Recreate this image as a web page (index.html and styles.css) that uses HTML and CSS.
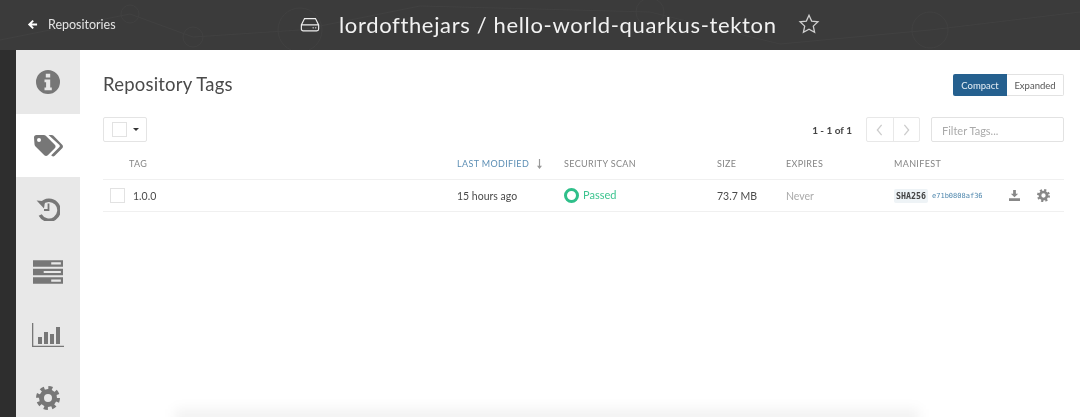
FILE: index.html
```html
<!DOCTYPE html>
<html lang="en">
<head>
    <meta charset="UTF-8">
    <meta name="viewport" content="width=device-width, initial-scale=1.0">
    <title>Repository Tags</title>
    <link rel="stylesheet" href="styles.css">
</head>
<body>
    <svg class="defs" width="0" height="0">
        <symbol id="gear" viewBox="0 0 24 24">
            <circle cx="12" cy="12" r="6.5" fill="none" stroke="currentColor" stroke-width="5"></circle>
            <circle cx="12" cy="12" r="9.8" fill="none" stroke="currentColor" stroke-width="4.4" stroke-dasharray="3.9 3.8"></circle>
        </symbol>
    </svg>

    <header class="topbar">
        <svg class="texture" width="1080" height="50" viewBox="0 0 1080 50">
            <circle cx="130" cy="14" r="9"></circle>
            <circle cx="193" cy="37" r="10"></circle>
            <circle cx="300" cy="30" r="22"></circle>
            <circle cx="650" cy="12" r="14"></circle>
            <circle cx="930" cy="30" r="18"></circle>
            <path d="M0 40 130 14 193 37 300 30 420 6 650 12 780 44 930 30 1080 12"></path>
        </svg>
        <a class="back-link">
            <svg class="back-arrow" viewBox="0 0 12 12"><path d="M6 1 1 6l5 5 1.500-1.500L5 7h6V5H5l2.500-2.500z"></path></svg>
            Repositories
        </a>
        <div class="repo-title">
            <svg class="drive-icon" viewBox="0 0 22 16">
                <path d="M5 1.500h12l3.500 7v4.500a2 2 0 0 1-2 2h-15a2 2 0 0 1-2-2V8.500zM1.500 8.500h19"></path>
                <circle cx="14.500" cy="11.700" r=".8"></circle>
                <circle cx="17.300" cy="11.700" r=".8"></circle>
            </svg>
            <h1>lordofthejars / hello-world-quarkus-tekton</h1>
            <svg class="star-icon" viewBox="0 0 24 24"><path d="M12 2.500l2.900 6.300 6.900.8-5.100 4.700 1.400 6.800-6.100-3.400-6.100 3.400 1.400-6.800-5.100-4.700 6.900-.8z"></path></svg>
        </div>
    </header>

    <div class="layout">
        <nav class="sidebar">
            <div class="tab">
                <svg class="icon" viewBox="0 0 24 24"><path fill-rule="evenodd" d="M12 0a12 12 0 1 0 0 24 12 12 0 0 0 0-24zM9.800 3.800h4.400v3.600H9.800zM8.500 9.500h5.700v8h1.600v2.800H8.500v-2.800h1.600v-5.200H8.500z"></path></svg>
            </div>
            <div class="tab active">
                <svg class="icon icon-tags" viewBox="0 0 30 24"><path d="M1 3.500A2.500 2.500 0 0 1 3.500 1h7.300c.8 0 1.500.3 2 .8l9 9c1 1 1 2.600 0 3.500l-7 7c-1 1-2.500 1-3.500 0l-9-9c-.5-.5-.8-1.200-.8-2zM6 4a2 2 0 1 0 0 4 2 2 0 0 0 0-4z" fill-rule="evenodd"></path><path d="M15.500 1h3c.8 0 1.500.3 2 .8l8.700 9c1 1 1 2.600 0 3.500l-7.500 7.500c-1 1-2.200.7-3 0l-.5-.6 8-8c.8-.8.8-1.700 0-2.500z"></path></svg>
            </div>
            <div class="tab">
                <svg class="icon" viewBox="0 0 24 24"><path class="line" d="M5.300 6.800A10 10 0 1 1 4.200 18"></path><path d="M.6 3.500 9 4.200 8 11.500z"></path><path class="line thin" d="M12.500 6.500V13H8"></path></svg>
            </div>
            <div class="tab">
                <svg class="icon icon-wide" viewBox="0 0 28 22">
                    <path fill-rule="evenodd" d="M0 0h28v6H0zM17 2v2h9V2zM0 8h28v6H0zM10 10v2h16v-2zM0 16h28v6H0zM17 18v2h9v-2z"></path>
                </svg>
            </div>
            <div class="tab">
                <svg class="icon icon-chart" viewBox="0 0 32 24">
                    <path d="M0 0h1.300v22.700H32V24H0z"></path>
                    <path d="M6 14h4v7H6zM12 9h4v12h-4zM18 11h4v10h-4zM24 4h4v17h-4z"></path>
                </svg>
            </div>
            <div class="tab">
                <svg class="icon"><use href="#gear"></use></svg>
            </div>
        </nav>

        <main class="content">
            <div class="title-row">
                <h2>Repository Tags</h2>
                <div class="view-toggle">
                    <span class="toggle-btn selected">Compact</span>
                    <span class="toggle-btn">Expanded</span>
                </div>
            </div>

            <div class="tools-row">
                <div class="select-menu">
                    <span class="checkbox"></span>
                    <span class="caret"></span>
                </div>
                <div class="tools-right">
                    <span class="count">1 - 1 of 1</span>
                    <div class="pager">
                        <span class="pager-btn"><svg viewBox="0 0 8 14"><path d="M6.500 1 1.500 7l5 6"></path></svg></span>
                        <span class="pager-btn"><svg viewBox="0 0 8 14"><path d="M1.500 1l5 6-5 6"></path></svg></span>
                    </div>
                    <div class="filter">Filter Tags...</div>
                </div>
            </div>

            <div class="tag-row tag-head">
                <span class="col-tag">TAG</span>
                <span class="sorted">LAST MODIFIED <svg class="sort-arrow" viewBox="0 0 6 12"><path d="M2.300 0h1.400v8H6l-3 4-3-4h2.300z"></path></svg></span>
                <span>SECURITY SCAN</span>
                <span>SIZE</span>
                <span>EXPIRES</span>
                <span>MANIFEST</span>
            </div>

            <div class="tag-row tag-item">
                <span class="col-tag-name"><span class="checkbox"></span>1.0.0</span>
                <span>15 hours ago</span>
                <span class="passed"><span class="ring"></span><span class="passed-text">Passed</span></span>
                <span>73.7 MB</span>
                <span class="never">Never</span>
                <span class="manifest">
                    <span class="sha-label">SHA256</span>
                    <span class="sha">e71b0808af36</span>
                    <svg class="dl-icon" viewBox="0 0 12 12"><path d="M4.500 0h3v4H10L6 8 2 4h2.500zM0 9h12v3H0z"></path></svg>
                    <svg class="row-gear"><use href="#gear"></use></svg>
                </span>
            </div>
        </main>
    </div>

    <!-- shadow at the bottom edge of the frame -->
    <div class="bottom-shade"></div>
</body>
</html>
```

FILE: styles.css
```css
html, body {
    height: 100%;
}

body {
    margin: 0;
    background: #2e2e2e;
    font-family: 'Lato', 'Liberation Sans', sans-serif;
    color: #444;
    overflow: hidden;
    position: relative;
    filter: blur(0.4px);
}

.defs {
    position: absolute;
}

.topbar {
    position: relative;
    display: flex;
    align-items: center;
    height: 50px;
    padding-left: 27px;
    padding-bottom: 2px;
    box-sizing: border-box;
    background: #3b3b3b;
    color: #f2f2f2;
    overflow: hidden;
}

.texture {
    position: absolute;
    top: 0;
    left: 0;
    fill: none;
    stroke: #414141;
    stroke-width: 1;
}

.back-link {
    position: relative;
    display: flex;
    align-items: center;
    gap: 10px;
    font-size: 12.500px;
    color: #e4e4e4;
    width: 273px;
}

.back-arrow {
    width: 11px;
    height: 11px;
    fill: #fff;
}

.repo-title {
    position: relative;
    display: flex;
    align-items: center;
}

.repo-title h1 {
    margin: 0 21px 0 19px;
    font-size: 22px;
    font-weight: 400;
    letter-spacing: 0.650px;
    white-space: nowrap;
}

.drive-icon {
    width: 20px;
    height: 15px;
    fill: #eee;
}

.drive-icon path {
    fill: none;
    stroke: #eee;
    stroke-width: 1.300;
}

.star-icon {
    width: 22px;
    height: 22px;
    fill: none;
    stroke: #d0d0d0;
    stroke-width: 1.400;
}

.layout {
    display: flex;
    margin-left: 16px;
    height: 367px;
    background: #fff;
}

.sidebar {
    width: 64px;
    flex-shrink: 0;
    background: #e8e8e8;
}

.tab {
    display: flex;
    align-items: center;
    justify-content: center;
    height: 63px;
    color: #777;
}

.tab:first-child {
    height: 64px;
}

.tab.active {
    background: #fff;
}

.icon {
    width: 24px;
    height: 24px;
    fill: currentColor;
}

.icon-tags {
    width: 30px;
}

.icon-wide {
    width: 30px;
}

.icon-chart {
    width: 32px;
}

.icon .line {
    fill: none;
    stroke: currentColor;
    stroke-width: 3.500;
}

.icon .line.thin {
    stroke-width: 1.800;
}

.content {
    flex: 1;
    padding: 0 16px 0 23px;
}

.title-row {
    display: flex;
    align-items: center;
    justify-content: space-between;
    height: 22px;
    padding-top: 24px;
}

.title-row h2 {
    margin: 0 0 3px;
    font-size: 18.500px;
    font-weight: 400;
    color: #4a4a4a;
    letter-spacing: 0.200px;
}

.view-toggle {
    display: flex;
    height: 22px;
    margin-bottom: 0;
    font-size: 9.500px;
}

.toggle-btn {
    display: flex;
    align-items: center;
    justify-content: center;
    width: 57px;
    border: 1px solid #e2e2e2;
    border-left: none;
    border-radius: 0 2px 2px 0;
    box-sizing: border-box;
    color: #555;
}

.toggle-btn.selected {
    width: 54px;
    background: #25608f;
    border: none;
    border-radius: 2px 0 0 2px;
    color: #e8f0f6;
}

.tools-row {
    display: flex;
    align-items: center;
    justify-content: space-between;
    margin-top: 21px;
    height: 25px;
}

.select-menu {
    display: flex;
    align-items: center;
    gap: 6px;
    width: 44px;
    height: 25px;
    padding-left: 8px;
    box-sizing: border-box;
    border: 1px solid #e4e4e4;
    border-radius: 2px;
}

.checkbox {
    display: inline-block;
    width: 13px;
    height: 13px;
    border: 1px solid #e2e2e2;
    flex-shrink: 0;
}

.caret {
    width: 0;
    height: 0;
    border: 3px solid transparent;
    border-top: 3px solid #333;
    border-bottom: none;
}

.tools-right {
    display: flex;
    align-items: center;
}

.count {
    font-size: 10px;
    font-weight: 700;
    color: #444;
    margin-right: 14px;
}

.pager {
    display: flex;
    width: 54px;
    height: 25px;
    border: 1px solid #e8e8e8;
    border-radius: 2px;
    box-sizing: border-box;
    margin-right: 11px;
}

.pager-btn {
    flex: 1;
    display: flex;
    align-items: center;
    justify-content: center;
}

.pager-btn:first-child {
    border-right: 1px solid #e8e8e8;
}

.pager-btn svg {
    width: 7px;
    height: 12px;
    fill: none;
    stroke: #ccc;
    stroke-width: 1.500;
}

.filter {
    width: 133px;
    height: 25px;
    line-height: 25px;
    padding-left: 10px;
    box-sizing: border-box;
    border: 1px solid #e2e2e2;
    border-radius: 2px;
    font-size: 11px;
    color: #aaa;
}

.tag-row {
    display: grid;
    grid-template-columns: 354px 107px 153px 69px 108px 1fr;
    align-items: center;
    border-bottom: 1px solid #f0f0f0;
    box-sizing: border-box;
}

.tag-head {
    height: 38px;
    padding-top: 6px;
    font-size: 9px;
    letter-spacing: 0.350px;
    color: #858585;
}

.col-tag {
    padding-left: 26px;
}

.sorted {
    display: flex;
    align-items: center;
    gap: 8px;
    color: #5d8fb5;
    white-space: nowrap;
}

.sort-arrow {
    width: 5px;
    height: 10px;
    fill: #999;
}

.tag-item {
    height: 32px;
    font-size: 10.500px;
    color: #4a4a4a;
}

.col-tag-name {
    display: flex;
    align-items: center;
    gap: 8px;
    padding-left: 7px;
}

.passed {
    display: flex;
    align-items: center;
    gap: 4px;
    color: #3cc48f;
}

.passed-text {
    font-size: 11px;
    margin-bottom: 2px;
}

.ring {
    width: 9px;
    height: 9px;
    border: 3px solid #2fbf8a;
    border-radius: 50%;
}

.never {
    color: #aaa;
}

.manifest {
    display: flex;
    align-items: center;
    white-space: nowrap;
}

.sha-label {
    padding: 2px 2px;
    background: #eef3f6;
    border-radius: 2px;
    font-family: 'DejaVu Sans Mono', 'Liberation Mono', monospace;
    font-size: 8.300px;
    font-weight: 700;
    color: #444;
}

.sha {
    margin-left: 4px;
    font-family: 'DejaVu Sans Mono', 'Liberation Mono', monospace;
    font-size: 7px;
    color: #4f87ad;
}

.dl-icon {
    width: 11px;
    height: 11px;
    margin-left: 26px;
    fill: #888;
}

.row-gear {
    width: 13px;
    height: 13px;
    margin-left: 17px;
    color: #888;
}

.bottom-shade {
    position: absolute;
    left: 175px;
    right: 161px;
    bottom: -10px;
    height: 18px;
    background: rgba(0, 0, 0, 0.05);
    filter: blur(6px);
}
```
